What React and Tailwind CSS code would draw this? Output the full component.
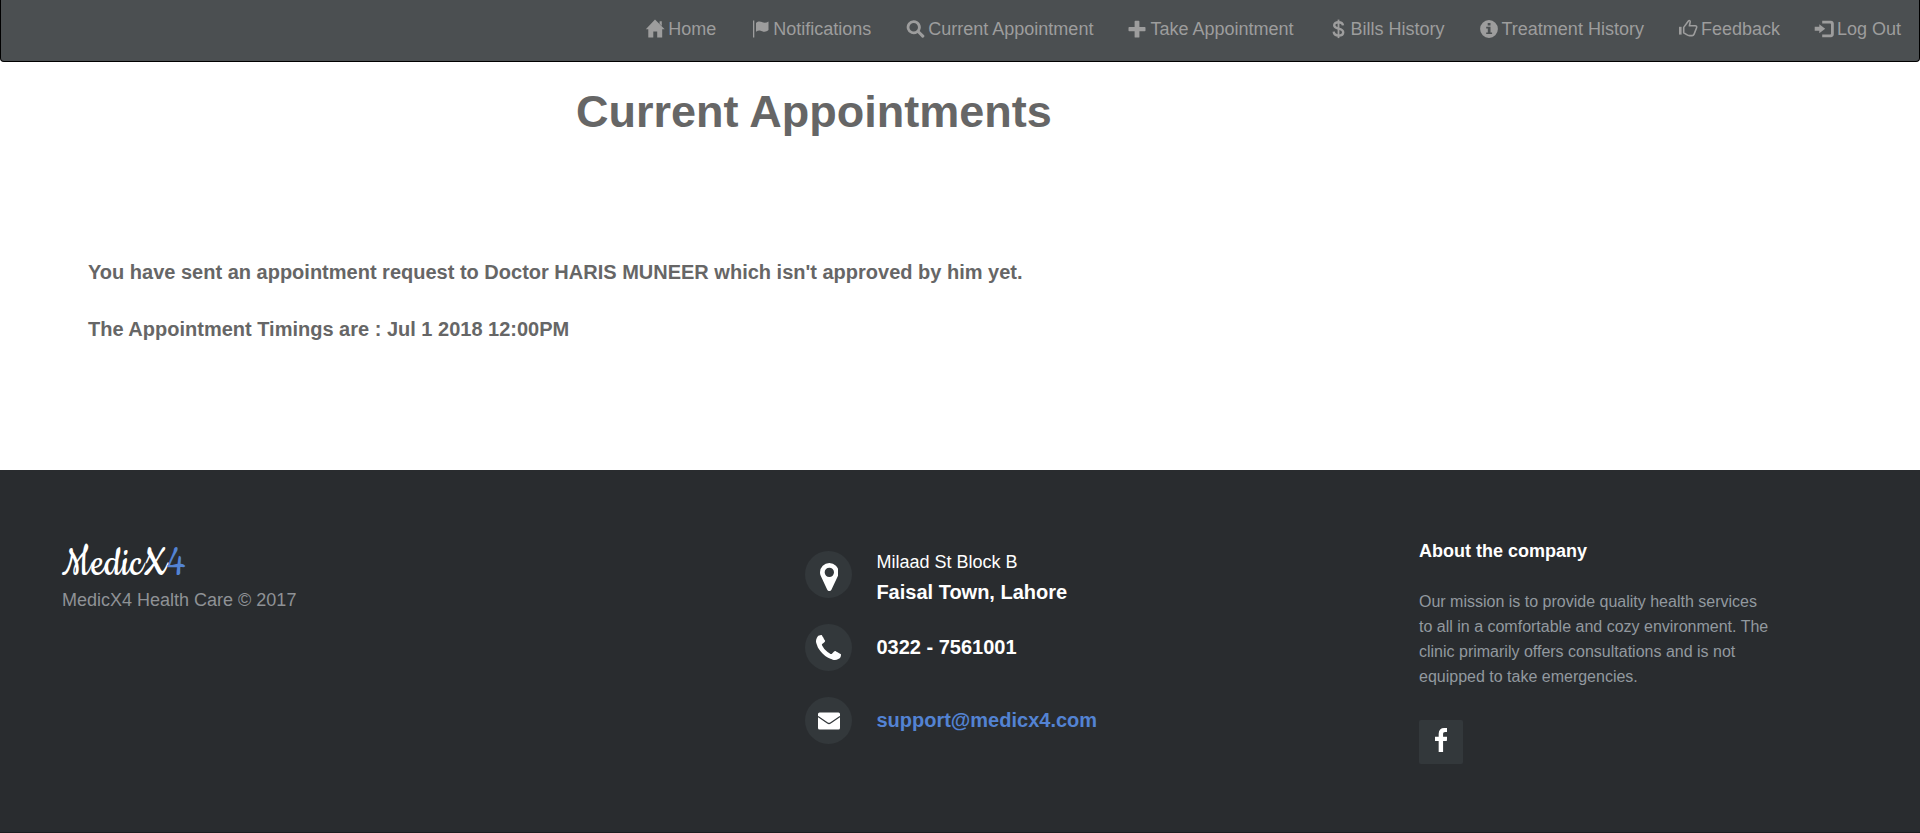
import React from "react";

function Glyph({ children, className = "" }) {
  return (
    <svg viewBox="0 0 20 20" className={`size-5 shrink-0 fill-current ${className}`} aria-hidden="true">
      {children}
    </svg>
  );
}

const icons = {
  home: (
    <Glyph>
      <path d="M10 .6 19.700 10.300H17.200V18.600H12.200V12.500H8.300V18.600H3.300V10.300H.8Z" />
      <path d="M14.600 2.200h2.200v4.800l-2.200-2.300z" />
    </Glyph>
  ),
  flag: (
    <Glyph>
      <path d="M3 1.500h1.300v17H3z" />
      <path d="M6 4c2-2 4.200-1.900 6-.9 2 1.100 4.200 1 6.500-.7v8.700c-2 2-4.500 2-6.500 1.100-2-.9-4-.8-6 .6z" />
    </Glyph>
  ),
  search: (
    <Glyph>
      <path fillRule="evenodd" d="M8.700 1.200a7 7 0 1 0 3.900 12.800l4.300 4.400c.5.500 1.100.5 1.600 0l.6-.6c.5-.5.5-1.100 0-1.600l-4.400-4.300A7 7 0 0 0 8.700 1.200Zm0 2.700a4.300 4.300 0 1 1 0 8.600 4.300 4.300 0 0 1 0-8.600Z" />
    </Glyph>
  ),
  plus: (
    <Glyph>
      <path d="M8.300 1.800h3.400c.4 0 .7.300.7.700v5.500h5.400c.4 0 .7.300.7.700v2.900c0 .4-.3.700-.7.700h-5.400v5.600c0 .4-.3.700-.7.700H8.300c-.4 0-.7-.3-.7-.7v-5.600H2.200c-.4 0-.7-.3-.7-.7V8.700c0-.4.3-.7.700-.7h5.400V2.500c0-.4.300-.7.700-.7Z" />
    </Glyph>
  ),
  dollar: (
    <Glyph>
      <path fill="none" stroke="currentColor" strokeWidth="2.400" d="M15 6.400C14.700 4.200 13 3.200 10.500 3.200c-2.600 0-4.300 1.200-4.300 3.100 0 4.500 9 2.100 9 7 0 2-1.800 3.300-4.600 3.300-2.800 0-4.700-1.300-4.900-3.900" />
      <path d="M9.600.6h1.800v18.500H9.600z" />
    </Glyph>
  ),
  info: (
    <Glyph>
      <path fillRule="evenodd" d="M10 1.100a8.900 8.900 0 1 0 0 17.800 8.900 8.900 0 0 0 0-17.800ZM8.700 3.900h2.800v2.500H8.700ZM7.200 7.700h4.300v5.700h1.600v1.700H7.200v-1.700h1.600V9.400H7.200Z" />
    </Glyph>
  ),
  thumb: (
    <Glyph>
      <path d="M1 7.800h2.600v7.800H1z" />
      <path fill="none" stroke="currentColor" strokeWidth="1.600" strokeLinejoin="round" d="M5.700 8.400 10.400 2c.7-.8 2-.2 1.800.9l-.8 3.900h5.900c1.200 0 1.700 1 1.300 2l-2.500 6.300c-.4 1-1 1.500-2 1.500h-2.700c-1 0-1.800-.4-2.700-1l-3-1.800z" />
    </Glyph>
  ),
  logout: (
    <Glyph>
      <path d="M5.300 5.200 11.200 9.700 5.300 14.200V11.800H.7V7.700h4.600z" />
      <path d="M8.200 1.700h8.700c1.700 0 2.900 1.200 2.900 2.900v10.700c0 1.700-1.200 2.900-2.900 2.900H8.200v-2.700h7.700c.7 0 1.100-.4 1.100-1.100V5.500c0-.7-.4-1.100-1.100-1.100H8.200z" />
    </Glyph>
  ),
};

const links = [
  ["home", "Home"],
  ["flag", "Notifications"],
  ["search", "Current Appointment"],
  ["plus", "Take Appointment"],
  ["dollar", "Bills History"],
  ["info", "Treatment History"],
  ["thumb", "Feedback"],
  ["logout", "Log Out"],
];

function Navbar() {
  return (
    <nav className="rounded-b border border-t-0 border-black bg-[#4b4f51]">
      <ul className="flex flex-wrap justify-end pr-px">
        {links.map(([icon, label]) => (
          <li key={label}>
            <a href="#" className="flex items-center gap-[3px] px-[17px] pt-[19px] pb-[22px] text-lg leading-5 text-[#9d9d9d]">
              {icons[icon]}
              <span>{label}</span>
            </a>
          </li>
        ))}
      </ul>
    </nav>
  );
}

function ContactRow({ icon, children }) {
  return (
    <li className="flex h-[47px] items-center gap-6">
      <span className="flex size-[47px] shrink-0 items-center justify-center rounded-full bg-[#33383b]">{icon}</span>
      {children}
    </li>
  );
}

function Footer() {
  return (
    <footer className="flex-1 border-b border-[#1c1e20] bg-[#292c2f] px-[62px] pt-[66px] pb-[66px] text-white">
      <div className="grid grid-cols-[40%_35%_20%] gap-x-[5px]">
        <div className="pt-1">
          <h3 className="font-[Cookie,cursive] text-[45px] leading-[48px]">
            MedicX<span className="text-[#5383d3]">4</span>
          </h3>
          <p className="text-lg leading-6 text-[#8f9296]">MedicX4 Health Care © 2017</p>
        </div>

        <ul className="flex flex-col gap-[26px] pt-[15px] pl-5">
          <ContactRow
            icon={
              <svg viewBox="0 128 1024 1536" className="mt-1 h-7 fill-current" aria-hidden="true">
                <path d="M768 640q0-106-75-181t-181-75-181 75-75 181 75 181 181 75 181-75 75-181zm256 0q0 109-33 179l-364 774q-16 33-47.5 52t-67.5 19-67.5-19-46.500-52l-365-774q-33-70-33-179 0-212 150-362t362-150 362 150 150 362z" />
              </svg>
            }
          >
            <p className="mt-1 text-xl leading-[30px] font-bold">
              <span className="block text-lg leading-[30px] font-normal">Milaad St Block B</span>
              Faisal Town, Lahore
            </p>
          </ContactRow>
          <ContactRow
            icon={
              <svg viewBox="0 128 1408 1408" className="size-[25px] fill-current" aria-hidden="true">
                <path d="M1408 1240q0 27-10 70.500t-21 68.500q-21 50-122 106-94 51-186 51-27 0-53-3.500t-57.500-12.500-47-14.500-55.500-20.500-49-18q-98-35-175-83-127-79-264-216t-216-264q-48-77-83-175-3-9-18-49t-20.500-55.500-14.500-47-12.500-57.500-3.500-53q0-92 51-186 56-101 106-122 25-11 68.500-21t70.500-10q14 0 21 3 18 6 53 76 11 19 30 54t35 63.500 31 53.500q3 4 17.500 25t21.500 35.500 7 28.500q0 20-28.500 50t-62 55-62 53-28.500 46q0 9 5 22.500t8.500 20.500 14 24 11.500 19q76 137 174 235t235 174q2 1 19 11.500t24 14 20.500 8.500 22.500 5q18 0 46-28.500t53-62 55-62 50-28.500q14 0 28.500 7t35.500 21.500 25 17.500q25 15 53.500 31t63.500 35 54 30q70 35 76 53 3 7 3 21z" />
              </svg>
            }
          >
            <p className="pb-0.5 text-xl font-bold">0322 - 7561001</p>
          </ContactRow>
          <ContactRow
            icon={
              <svg viewBox="0 0 22 18" className="w-[22px]" aria-hidden="true">
                <rect y=".5" width="22" height="17" rx="1.500" fill="currentColor" />
                <path d="M0 4.500 9.500 11q1.500 1 3 0L22 4.500" fill="none" stroke="#33383b" strokeWidth="1.300" />
              </svg>
            }
          >
            <a href="mailto:support@medicx4.com" className="pb-0.5 text-xl font-bold text-[#5383d3]">
              support@medicx4.com
            </a>
          </ContactRow>
        </ul>

        <div className="pt-px">
          <h4 className="text-lg leading-7 font-bold">About the company</h4>
          <p className="mt-6 pr-2 text-base leading-[25px] text-[#92999f]">
            Our mission is to provide quality health services to all in a comfortable and cozy environment. The clinic
            primarily offers consultations and is not equipped to take emergencies.
          </p>
          <a
            href="#"
            aria-label="Facebook"
            className="mt-[31px] flex size-11 items-center justify-center rounded-xs bg-[#33383b]"
          >
            <svg viewBox="95 0 864 1664" className="mb-1 h-6 fill-current" aria-hidden="true">
              <path d="M959 12v264h-157q-86 0-116 36t-30 108v189h293l-39 296h-254v759h-306v-759h-255v-296h255v-218q0-186 104-288.500t277-102.500q147 0 228 12z" />
            </svg>
          </a>
        </div>
      </div>
    </footer>
  );
}

export default function App() {
  return (
    <div className="flex min-h-screen flex-col bg-white font-['Liberation_Sans',Arial,sans-serif]">
      <Navbar />
      <main className="pb-32 font-bold text-[#666]">
        <h1 className="pt-6 pl-[30%] text-[45px] leading-[52px]">Current Appointments</h1>
        <div className="flex flex-col gap-8 pt-[122px] pl-[88px] text-xl leading-[25px]">
          <p>You have sent an appointment request to Doctor HARIS MUNEER which isn't approved by him yet.</p>
          <p>The Appointment Timings are : Jul 1 2018 12:00PM</p>
        </div>
      </main>
      <Footer />
    </div>
  );
}
